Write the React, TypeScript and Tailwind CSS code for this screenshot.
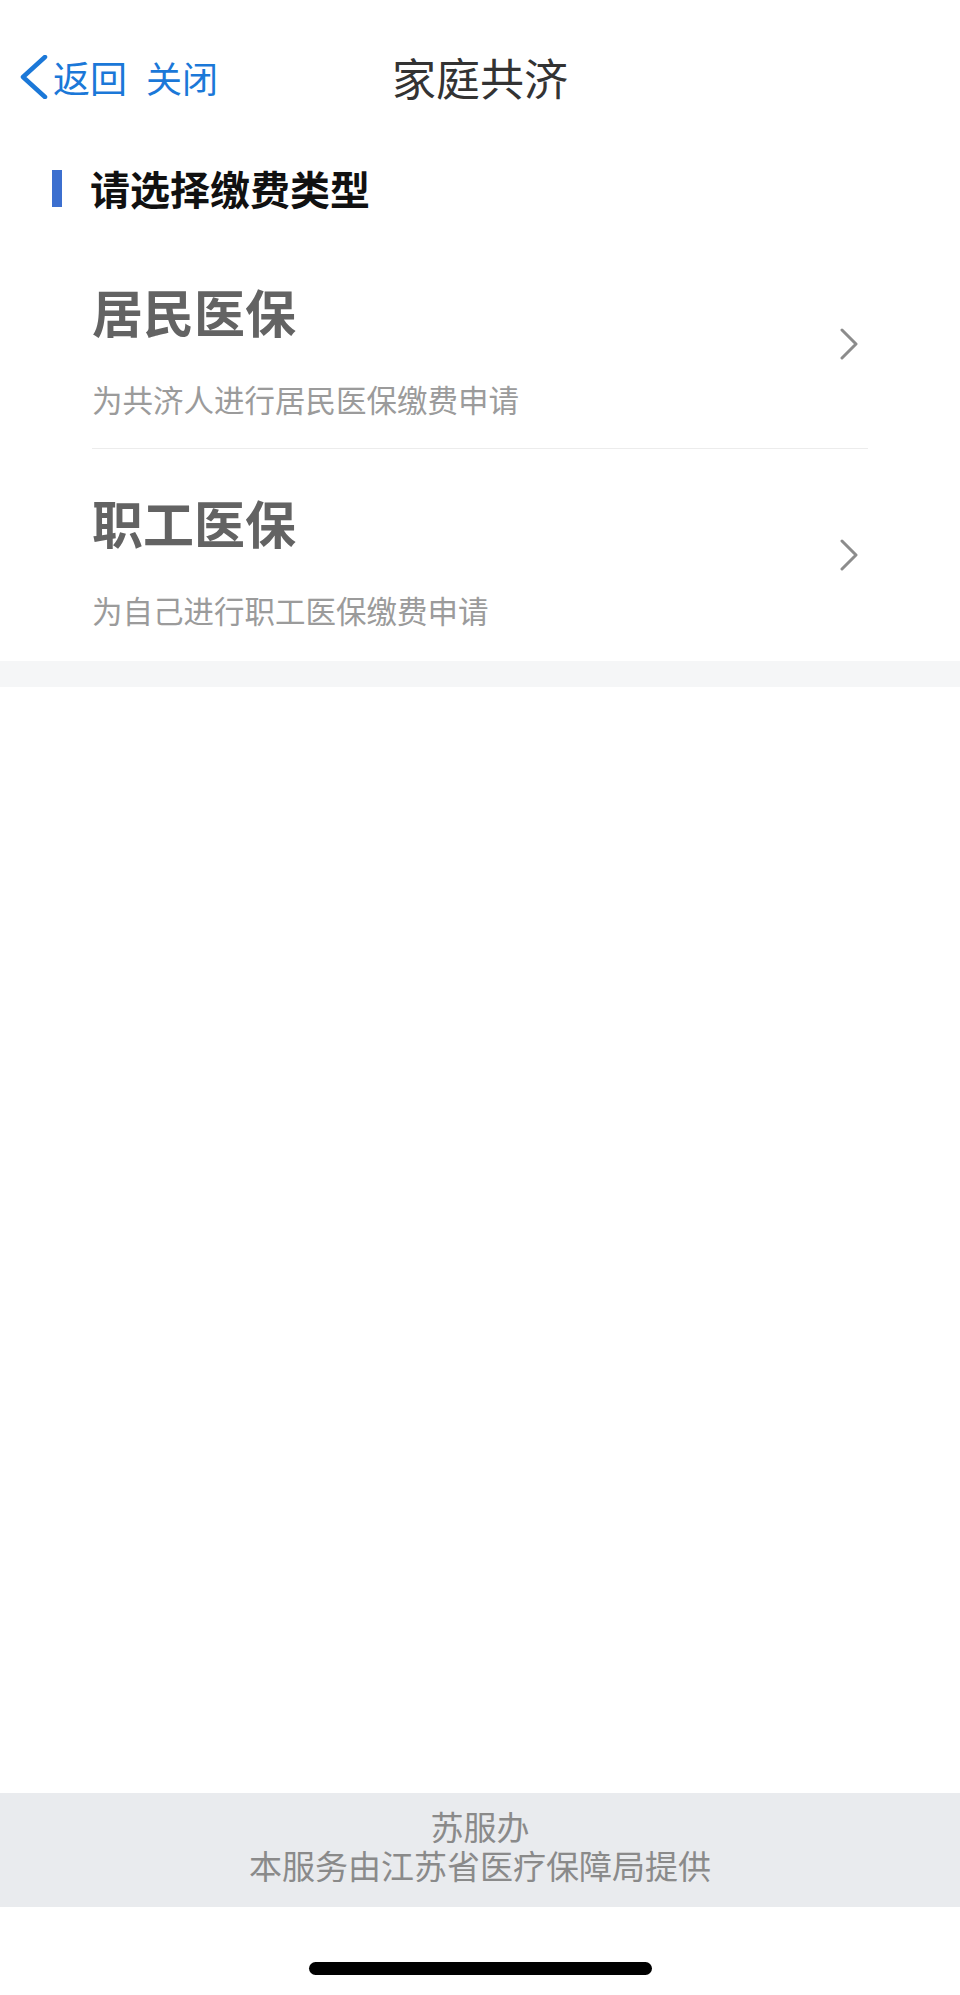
import React from "react";

const font = { fontFamily: '"Noto Sans CJK SC", "Noto Sans", sans-serif' };

function Item({ title, desc, divider, pt, pb }: { title: string; desc: string; divider?: boolean; pt: string; pb: string }) {
  return (
    <div className="mx-[92px]">
      <div className={`flex items-start ${pt} ${pb}`}>
        <div className="flex-1">
          <div className="text-[51px] leading-[56px] font-bold text-[#636363]">{title}</div>
          <div className="mt-[40px] text-[30.5px] leading-[40px] text-[#9b9b9b]">{desc}</div>
        </div>
        <svg width="20" height="32" viewBox="0 0 20 32" className="mr-[9px] mt-[45px]">
          <polyline points="3,2 17,16 3,30" fill="none" stroke="#8c8c8c" strokeWidth="3" strokeLinecap="round" strokeLinejoin="round" />
        </svg>
      </div>
      {divider && <div className="h-px bg-[#ececec]" />}
    </div>
  );
}

export default function App() {
  return (
    <div className="w-[960px] h-[1995px] bg-white flex flex-col" style={font}>
      <div className="pt-[37px] h-[117px] relative flex items-center">
        <div className="flex items-center pl-[20px] text-[#1b78d8]">
          <svg width="28" height="44" viewBox="0 0 28 44">
            <polyline points="25,2 3,22 25,42" fill="none" stroke="#1b78d8" strokeWidth="4.5" strokeLinecap="round" strokeLinejoin="round" />
          </svg>
          <span className="ml-[5px] text-[37px] leading-[44px]">返回</span>
          <span className="ml-[19px] text-[36px] leading-[44px]">关闭</span>
        </div>
        <div className="absolute left-0 right-0 top-[37px] h-[80px] flex items-center justify-center pointer-events-none">
          <span className="text-[44px] leading-[52px] text-[#333333]">家庭共济</span>
        </div>
      </div>
      <div className="mt-[51px] flex items-center pl-[52px] h-[40px]">
        <div className="w-[10px] h-[37px] bg-[#3c6fcf]" />
        <span className="ml-[28px] text-[40px] leading-[48px] font-bold text-[#111111]">请选择缴费类型</span>
      </div>
      <div className="mt-[25px]">
        <Item title="居民医保" desc="为共济人进行居民医保缴费申请" divider pt="pt-[50px]" pb="pb-[29px]" />
        <Item title="职工医保" desc="为自己进行职工医保缴费申请" pt="pt-[45px]" pb="pb-[31px]" />
      </div>
      <div className="h-[26px] bg-[#f5f6f7]" />
      <div className="flex-1" />
      <div className="bg-[#e9ebee] pt-[14px] pb-[22px] flex flex-col items-center text-[#8a8a8a]">
        <div className="text-[33px] leading-[39px]">苏服办</div>
        <div className="text-[33px] leading-[39px]">本服务由江苏省医疗保障局提供</div>
      </div>
      <div className="h-[88px] flex justify-center">
        <div className="mt-[55px] w-[343px] h-[13px] rounded-full bg-black" />
      </div>
    </div>
  );
}
